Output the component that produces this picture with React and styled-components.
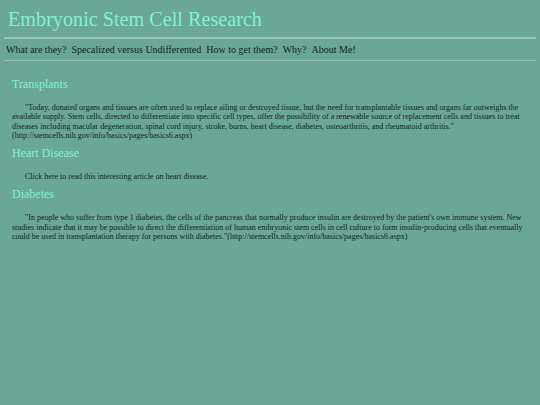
import React from 'react';
import styled, { createGlobalStyle } from 'styled-components';

const serif = `"Liberation Serif", "Times New Roman", Times, serif`;

const GlobalStyle = createGlobalStyle`
  html, body {
    margin: 0;
    padding: 0;
    background: #6ba797;
  }
  body {
    padding: 0 4px;
    font-family: ${serif};
    color: #122320;
  }
`;

const Page = styled.div`
  display: flex;
  flex-direction: column;
  font-family: ${serif};
`;

const Title = styled.h1`
  margin: 0;
  padding: 7px 0 0 4px;
  font-family: ${serif};
  font-size: 20.2px;
  font-weight: normal;
  line-height: 25px;
  color: #82f2ce;
`;

const Rule = styled.hr`
  margin: ${({ $top }) => $top || 0}px 0 0;
  border: 0;
  height: ${({ $thick }) => ($thick ? 2 : 1)}px;
  background: #9dbfb5;
`;

const Nav = styled.nav`
  display: flex;
  gap: 5px;
  padding: 5px 0 5px 2px;
  font-family: ${serif};
  font-size: 10px;
  line-height: 11px;
`;

const NavItem = styled.span`
  white-space: nowrap;
`;

const Content = styled.main`
  padding: 16px 8px 0 8px;
`;

const Heading = styled.h2`
  margin: 0;
  font-family: ${serif};
  font-size: 12px;
  font-weight: normal;
  line-height: 14px;
  color: #82f2ce;
`;

const Para = styled.p`
  margin: 12px 0 6px;
  font-family: ${serif};
  font-size: 8px;
  line-height: 9.3px;
  text-indent: 13px;
`;

const sections = [
  {
    title: 'Transplants',
    text: '"Today, donated organs and tissues are often used to replace ailing or destroyed tissue, but the need for transplantable tissues and organs far outweighs the available supply. Stem cells, directed to differentiate into specific cell types, offer the possibility of a renewable source of replacement cells and tissues to treat diseases including macular degeneration, spinal cord injury, stroke, burns, heart disease, diabetes, osteoarthritis, and rheumatoid arthritis." (http://stemcells.nih.gov/info/basics/pages/basics6.aspx)',
  },
  {
    title: 'Heart Disease',
    text: 'Click here to read this interesting article on heart disease.',
  },
  {
    title: 'Diabetes',
    text: '"In people who suffer from type 1 diabetes, the cells of the pancreas that normally produce insulin are destroyed by the patient\'s own immune system. New studies indicate that it may be possible to direct the differentiation of human embryonic stem cells in cell culture to form insulin-producing cells that eventually could be used in transplantation therapy for persons with diabetes."(http://stemcells.nih.gov/info/basics/pages/basics6.aspx)',
  },
];

const navItems = ['What are they?', 'Specalized versus Undifferented', 'How to get them?', 'Why?', 'About Me!'];

export default function App() {
  return (
    <Page>
      <GlobalStyle />
      <Title>Embryonic Stem Cell Research</Title>
      <Rule $top={5} $thick />
      <Nav>
        {navItems.map((item) => (
          <NavItem key={item}>{item}</NavItem>
        ))}
      </Nav>
      <Rule />
      <Content>
        {sections.map((s) => (
          <section key={s.title}>
            <Heading>{s.title}</Heading>
            <Para>{s.text}</Para>
          </section>
        ))}
      </Content>
    </Page>
  );
}
